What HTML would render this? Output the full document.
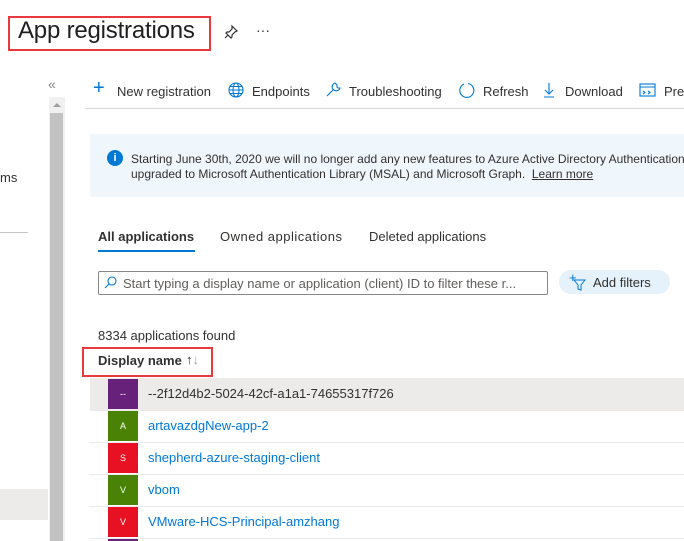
<!DOCTYPE html><html style="overflow:hidden;height:541px"><head><style>
body{margin:0;width:684px;height:541px;overflow:hidden;background:#fff;font-family:"Liberation Sans",sans-serif;color:#323130;position:relative}
.a{position:absolute;white-space:nowrap}
.t{font-size:13px}
.ic{position:absolute;left:108px;width:30px;height:30px;color:#fff;font-size:9px;text-align:center;line-height:30px}
.row{position:absolute;left:90px;width:594px;height:32px;border-bottom:1px solid #edebe9}
.lk{position:absolute;left:148px;font-size:13px;color:#0078d4}
</style></head><body>
<div class="a" style="left:8px;top:16px;width:199px;height:31px;border:2px solid #e8393e"></div>
<div class="a" style="left:18px;top:17px;font-size:24px;color:#201f1e;letter-spacing:-0.2px">App registrations</div>
<svg class="a" style="left:223px;top:24px" width="16" height="16" viewBox="0 0 16 16" fill="none" stroke="#323130" stroke-width="1.2"><path d="M9 2l5 5-2 1-3 3 0 2-1 1-5-5 1-1 2 0 3-3z M5 11l-3 3"/></svg>
<div class="a" style="left:256px;top:22px;font-size:14px">···</div>
<div class="a" style="left:48px;top:76px;font-size:14px;color:#8a8886">«</div>
<div class="a" style="left:49px;top:97px;width:16px;height:444px;background:#f0f0f0"></div>
<div class="a" style="left:50px;top:113px;width:13px;height:428px;background:#c2c2c2"></div>
<div class="a" style="left:53px;top:103px;width:0;height:0;border-left:4px solid transparent;border-right:4px solid transparent;border-bottom:4px solid #a0a0a0"></div>
<div class="a t" style="left:0;top:170px">ms</div>
<div class="a" style="left:0;top:232px;width:28px;height:1px;background:#c8c6c4"></div>
<div class="a" style="left:0;top:489px;width:48px;height:31px;background:#edebe9"></div>
<div class="a" style="left:85px;top:108px;width:599px;height:1px;background:#d6d6d6"></div>
<div class="a t" style="left:93px;color:#0078d4;font-size:20px;top:77px">+</div>
<div class="a t" style="left:117px;top:84px">New registration</div>
<svg class="a" style="left:228px;top:82px" width="16" height="16" viewBox="0 0 16 16" fill="none" stroke="#0078d4" stroke-width="1.1"><circle cx="8" cy="8" r="7"/><ellipse cx="8" cy="8" rx="3" ry="7"/><path d="M1 8h14M2 4.5h12M2 11.5h12"/></svg>
<div class="a t" style="left:252px;top:84px">Endpoints</div>
<svg class="a" style="left:325px;top:82px" width="16" height="16" viewBox="0 0 16 16" fill="none" stroke="#0078d4" stroke-width="1.1"><path d="M2 14l6-6M10 1a4 4 0 1 0 5 5l-2 0-1-1 0-2z"/></svg>
<div class="a t" style="left:349px;top:84px">Troubleshooting</div>
<svg class="a" style="left:459px;top:82px" width="16" height="16" viewBox="0 0 16 16" fill="none" stroke="#0078d4" stroke-width="1.1"><path d="M5 2a7 7 0 1 0 4-0.5"/></svg>
<div class="a t" style="left:483px;top:84px">Refresh</div>
<svg class="a" style="left:542px;top:82px" width="14" height="16" viewBox="0 0 14 16" fill="none" stroke="#0078d4" stroke-width="1.1"><path d="M7 1v11M3 8l4 4 4-4M2 15h10"/></svg>
<div class="a t" style="left:565px;top:84px">Download</div>
<svg class="a" style="left:639px;top:83px" width="17" height="14" viewBox="0 0 17 14" fill="none" stroke="#0078d4" stroke-width="1.1"><rect x="1" y="1" width="15" height="12"/><path d="M1 4h15M4 8l2 1.5-2 1.5M9 8l2 1.5-2 1.5"/></svg>
<div class="a t" style="left:664px;top:84px">Prev</div>
<div class="a" style="left:90px;top:134px;width:594px;height:63px;background:#eff6fc"></div>
<div class="a" style="left:107px;top:150px;width:16px;height:16px;border-radius:50%;background:#0078d4;color:#fff;font-size:11px;font-weight:bold;text-align:center;line-height:16px">i</div>
<div class="a" style="left:131px;top:152px;font-size:12px;line-height:15px">Starting June 30th, 2020 we will no longer add any new features to Azure Active Directory Authentication<br>upgraded to Microsoft Authentication Library (MSAL) and Microsoft Graph. &nbsp;<u>Learn more</u></div>
<div class="a t" style="left:98px;top:229px;font-weight:bold">All applications</div>
<div class="a" style="left:98px;top:250px;width:97px;height:2px;background:#0078d4"></div>
<div class="a t" style="left:220px;top:229px;letter-spacing:0.5px">Owned applications</div>
<div class="a t" style="left:369px;top:229px">Deleted applications</div>
<div class="a" style="left:98px;top:271px;width:448px;height:22px;border:1px solid #8a8886;border-radius:2px"></div>
<svg class="a" style="left:104px;top:276px" width="13" height="13" viewBox="0 0 13 13" fill="none" stroke="#0078d4" stroke-width="1.1"><circle cx="8" cy="5" r="4"/><path d="M5 8l-4 4"/></svg>
<div class="a t" style="left:123px;top:276px;color:#605e5c">Start typing a display name or application (client) ID to filter these r...</div>
<div class="a" style="left:559px;top:270px;width:111px;height:24px;border-radius:12px;background:#e5f1fb"></div>
<div class="a" style="left:569px;top:270px;color:#0078d4;font-size:13px">+</div>
<svg class="a" style="left:573px;top:279px" width="13" height="12" viewBox="0 0 13 12" fill="none" stroke="#0078d4" stroke-width="1"><path d="M1 1h11L8 6v5L5 10V6z"/></svg>
<div class="a t" style="left:593px;top:275px">Add filters</div>
<div class="a t" style="left:98px;top:328px">8334 applications found</div>
<div class="a" style="left:82px;top:347px;width:127px;height:26px;border:2px solid #e8393e"></div>
<div class="a t" style="left:98px;top:353px;font-weight:bold">Display name</div>
<div class="a t" style="left:186px;top:352px">↑<span style="color:#a19f9d">↓</span></div>
<div class="row" style="top:378px;background:#edebe9"></div>
<div class="row" style="top:410px"></div>
<div class="row" style="top:442px"></div>
<div class="row" style="top:474px"></div>
<div class="row" style="top:506px"></div>
<div class="ic" style="top:379px;background:#68217a">--</div>
<div class="ic" style="top:411px;background:#498205">A</div>
<div class="ic" style="top:443px;background:#e81123">S</div>
<div class="ic" style="top:475px;background:#498205">V</div>
<div class="ic" style="top:507px;background:#e81123">V</div>
<div class="ic" style="top:539px;height:2px;background:#68217a"></div>
<div class="lk" style="top:386px;color:#323130">--2f12d4b2-5024-42cf-a1a1-74655317f726</div>
<div class="lk" style="top:418px">artavazdgNew-app-2</div>
<div class="lk" style="top:450px">shepherd-azure-staging-client</div>
<div class="lk" style="top:482px">vbom</div>
<div class="lk" style="top:514px">VMware-HCS-Principal-amzhang</div>
</body></html>
